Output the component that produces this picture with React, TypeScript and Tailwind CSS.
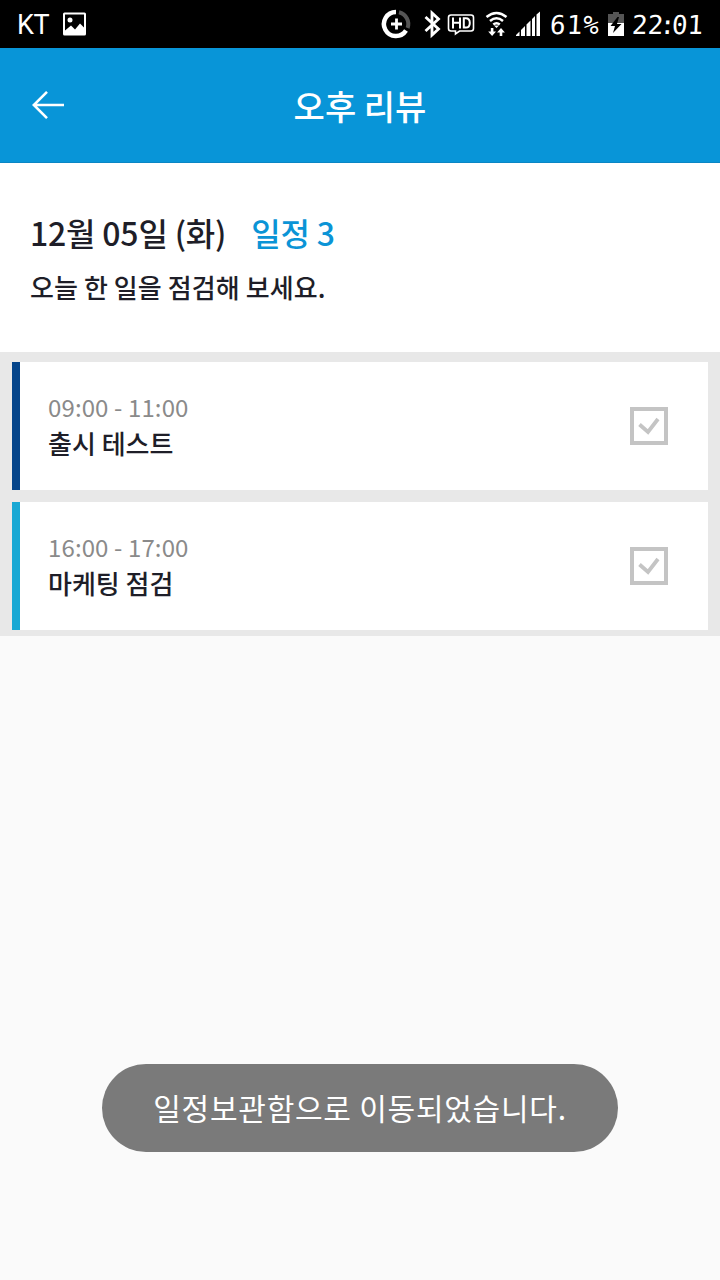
import type { ReactNode } from 'react';

type Schedule = {
  time: string;
  title: string;
  barClass: string;
};

const SCHEDULES: Schedule[] = [
  { time: '09:00 - 11:00', title: '출시 테스트', barClass: 'bg-[#04448a]' },
  { time: '16:00 - 17:00', title: '마케팅 점검', barClass: 'bg-[#18a8d4]' },
];

export default function App() {
  return (
    <div className="flex h-[1280px] w-[720px] flex-col overflow-hidden bg-[#fafafa] font-['Noto_Sans_CJK_KR',sans-serif] text-[#1e1e28]">
      <StatusBar />
      <AppBar title="오후 리뷰" />

      <section className="h-[189px] shrink-0 bg-white px-[30px] pt-[45px]">
        <h1 className="flex gap-[25px] text-[32px] leading-[48px] font-medium tracking-[-0.2px] whitespace-nowrap">
          <span>12월 05일 (화)</span>
          <span className="text-[#0b94d6]">일정 3</span>
        </h1>
        <p className="mt-[11px] text-[26px] leading-[40px] font-medium tracking-[0.08px]">
          오늘 한 일을 점검해 보세요.
        </p>
      </section>

      <ul className="flex h-[284px] shrink-0 flex-col gap-3 bg-[#e8e8e8] px-3 pt-2.5">
        {SCHEDULES.map((s) => (
          <ScheduleCard key={s.title} schedule={s} />
        ))}
      </ul>

      <Toast>일정보관함으로 이동되었습니다.</Toast>
    </div>
  );
}

function AppBar({ title }: { title: string }) {
  return (
    <header className="flex h-[115px] shrink-0 items-center border-b border-[#0a86c4] bg-[#0895d8] px-8 text-white">
      <button type="button" aria-label="뒤로" className="w-8">
        <svg width="32" height="28" viewBox="0 0 32 28" fill="none" stroke="currentColor" strokeWidth="2.6">
          <path d="M15 .9 1.8 14 15 27.1M1.8 14H32" />
        </svg>
      </button>
      <div className="flex-1 pt-0.5 pr-8 text-center text-[34px] leading-[50px] font-medium">{title}</div>
    </header>
  );
}

function ScheduleCard({ schedule }: { schedule: Schedule }) {
  return (
    <li className="flex h-32 bg-white">
      <div className={`w-2 ${schedule.barClass}`} />
      <div className="flex-1 pt-[27px] pl-7">
        <div className="text-[24px] leading-[36px] tracking-[0.12px] text-[#8a8a8a]">{schedule.time}</div>
        <div className="text-[26px] leading-[36px] font-medium">{schedule.title}</div>
      </div>
      <svg className="mt-[45px] mr-10" width="38" height="38" viewBox="0 0 38 38" fill="none" stroke="#c4c4c4">
        <rect x="2" y="2" width="34" height="34" strokeWidth="4" />
        <path d="m9.500 17.500 8.500 7.500L28 12" strokeWidth="3.800" />
      </svg>
    </li>
  );
}

function Toast({ children }: { children: ReactNode }) {
  return (
    <div className="mt-auto mb-32 flex h-[88px] w-[516px] items-center justify-center self-center rounded-full bg-[#7a7a7a] pb-0.5 text-[30px] tracking-[0.75px] whitespace-nowrap text-white">
      {children}
    </div>
  );
}

function StatusBar() {
  return (
    <div className="flex h-12 shrink-0 items-center bg-black text-white">
      <span className="ml-[17px] w-[45px] pt-0.5 font-['Roboto',sans-serif] text-[27px] leading-[48px] tracking-[-0.5px]">
        KT
      </span>
      <svg width="25" height="24" viewBox="0 0 24 24">
        <path
          fill="#fff"
          fillRule="evenodd"
          d="M2 .5h20A1.500 1.500 0 0 1 23.500 2v20a1.500 1.500 0 0 1-1.500 1.500H2A1.500 1.500 0 0 1 .5 22V2A1.500 1.500 0 0 1 2 .5ZM2.500 2.500v16l6-5 4 4 5-6 4 4v-13ZM7.500 5.500a2.500 2.500 0 1 1 0 5 2.500 2.500 0 0 1 0-5Z"
        />
      </svg>

      <div className="ml-auto flex h-12 items-center">
        {/* data saver, bluetooth, HD voice, wifi, signal */}
        <svg width="168" height="48" viewBox="380 0 168 48" fill="none" stroke="#fff">
          <path d="M396 12a12 12 0 1 0 10 18.500" strokeWidth="4.500" />
          <path d="M399 12.300A12 12 0 0 1 407.600 28" stroke="#555" strokeWidth="4" />
          <path d="M396.500 18.500v11M391 24h11" strokeWidth="2.800" />
          <path d="m425.500 17 13 12-6.500 6V13l6.500 6-13 12" strokeWidth="2.800" />
          <path d="M451 15h20q2.500 0 2.500 2.500v11q0 2.500-2.500 2.500h-11.500l-4 3v-3H451q-2.500 0-2.500-2.500v-11Q448.500 15 451 15Z" strokeWidth="1.600" />
          <path d="M453 17.500v11M460 17.500v11M453 22.800h7M463.800 18.300v9.200h2q4 0 4-4.600t-4-4.600Z" strokeWidth="2" />
          <path d="M486.500 17q10-8 20 0M490 21q6.500-5.500 13 0M493.300 24.500q3.300-2.500 6.500 0" strokeWidth="2.500" />
          <path fill="#fff" stroke="none" d="m494 25.500 2.500 2.500 2.500-2.500ZM490.800 28h2.600v3.500h2.600l-3.900 4.500-3.900-4.500h2.600ZM499.700 36v-3.500h-2.600l3.900-4.500 3.900 4.500h-2.600v3.500Z" />
          <path
            fill="#fff"
            stroke="none"
            d="M516 36v-1l3.500-3.500V36ZM521 36v-6l4-4v10ZM526.500 36V24.500l4-4V36ZM532 36V19l3-3v20ZM536.500 36V14.500l3.500-3V36Z"
          />
        </svg>
        <span className="w-[60px] font-['DejaVu_Sans_Mono',monospace] text-[26px] leading-[48px]">
          <span className="inline-block origin-left -skew-x-3 pt-0.5 pl-0.5 tracking-[1px]">61%</span>
        </span>
        <svg width="16" height="24" viewBox="0 0 16 24">
          <path fill="#555" d="M5 0h6v2h5v9H0V2h5Z" />
          <path fill="#fff" d="M0 11h16v13H0Z" />
          <path fill="#000" d="m9.500 5-7 9H7l-2 7 8.500-9H9l2-7Z" />
        </svg>
        <span className="w-[96px] pl-2 font-['DejaVu_Sans_Mono',monospace] text-[26px] leading-[48px]">
          <span className="inline-block -skew-x-3 pt-0.5">
            22<span className="-mx-[3.5px]">:</span>01
          </span>
        </span>
      </div>
    </div>
  );
}
